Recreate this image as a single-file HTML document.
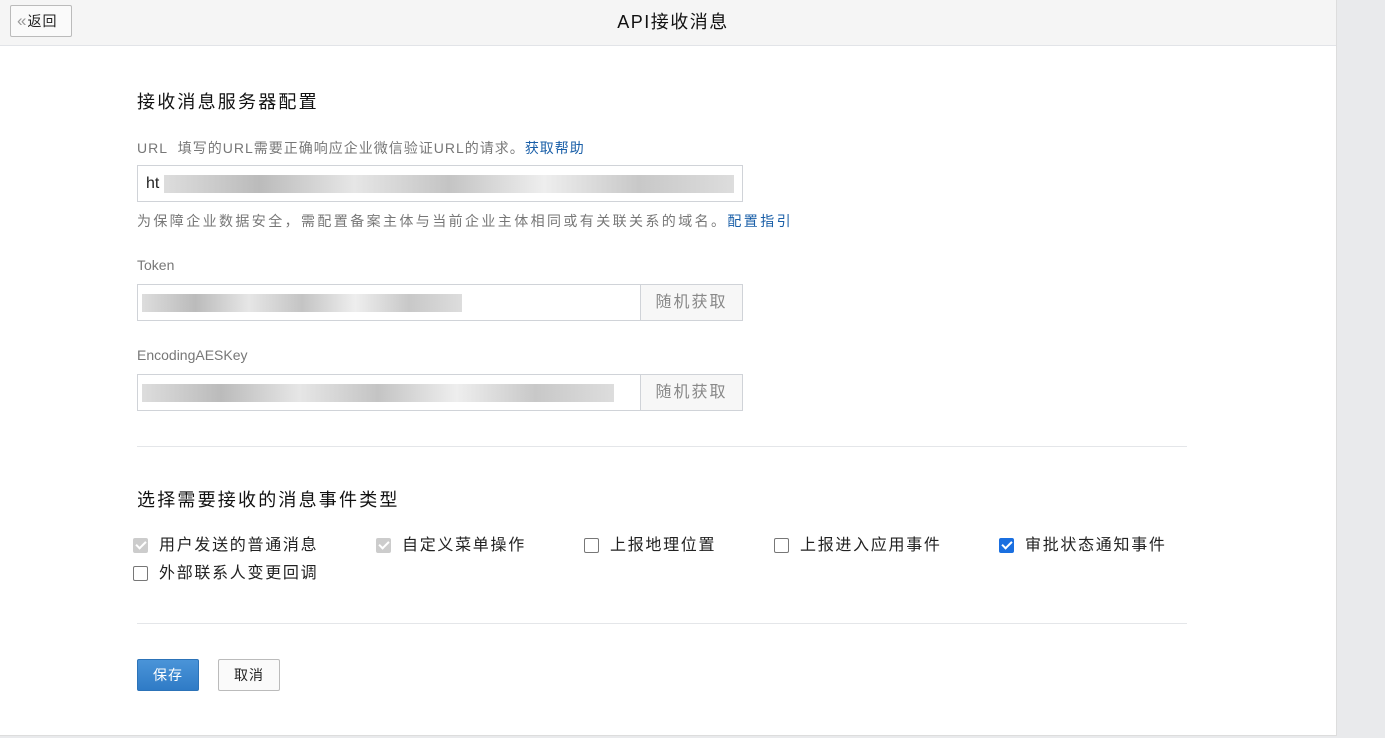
<!DOCTYPE html>
<html><head><meta charset="utf-8"><style>
*{box-sizing:border-box;margin:0;padding:0}
body{width:1385px;height:738px;background:#e9eaec;font-family:"Liberation Sans","Noto Sans CJK SC",sans-serif;position:relative;overflow:hidden;color:#222}
.main{position:absolute;left:0;top:0;width:1337px;height:736px;background:#fff;border-right:1px solid #ddd;border-bottom:1px solid #ddd}
.hd{height:46px;background:#f5f5f5;border-bottom:1px solid #e2e4e8;position:relative}
.back{position:absolute;left:10px;top:5px;width:62px;height:32px;border:1px solid #bbb;border-radius:2px;background:#fafafa;font-size:14px;line-height:30px;padding-left:6px;letter-spacing:1px}
.back span{color:#999;font-size:17px}
.title{position:absolute;left:0;right:0;top:0;text-align:center;font-size:18px;line-height:44px;color:#111;letter-spacing:1.5px;padding-left:10px}
.a{position:absolute;white-space:nowrap}
.h2{font-size:18px;color:#111;letter-spacing:2.2px}
.lbl{font-size:14px;color:#777}
.lnk{color:#1a5fa8}
.inp{border:1px solid #d0d3d8;height:37px;background:#fff;font-size:16px;line-height:35px;padding-left:8px;overflow:hidden}
.blur{position:absolute;top:9px;height:18px;background:linear-gradient(90deg,#ddd,#bbb,#e6e6e6,#c4c4c4,#eee,#c8c8c8,#ddd)}
.btn{position:absolute;right:0;top:0;width:102px;height:35px;border-left:1px solid #d0d3d8;background:#f7f7f7;color:#888;font-size:16px;text-align:center;line-height:35px;letter-spacing:2px}
.hr{position:absolute;left:137px;width:1050px;height:1px;background:#e4e6e9}
.cb{position:absolute;font-size:16px;color:#222;line-height:20px;letter-spacing:1.7px}
.cb i{position:absolute;left:-26px;top:2px;width:15px;height:15px;border:1.5px solid #777;border-radius:2px}
.cb i.d{background:#ccc;border-color:#ccc}
.cb i.c{background:#1a6fe0;border-color:#1a6fe0}
.cb i.d:after,.cb i.c:after{content:"";position:absolute;left:4px;top:0px;width:4px;height:8px;border:solid #fff;border-width:0 2px 2px 0;transform:rotate(45deg)}
</style></head><body>
<div class="main">
<div class="hd"><div class="back"><span>«</span>返回</div><div class="title">API接收消息</div></div>
<div class="a h2" style="left:137px;top:88px">接收消息服务器配置</div>
<div class="a lbl" style="left:137px;top:138px;letter-spacing:1px">URL&nbsp; 填写的URL需要正确响应企业微信验证URL的请求。<span class="lnk">获取帮助</span></div>
<div class="a inp" style="left:137px;top:165px;width:606px">ht<div class="blur" style="left:26px;width:570px"></div></div>
<div class="a lbl" style="left:137px;top:211px;letter-spacing:2.4px">为保障企业数据安全，需配置备案主体与当前企业主体相同或有关联关系的域名。<span class="lnk">配置指引</span></div>
<div class="a lbl" style="left:137px;top:257px">Token</div>
<div class="a inp" style="left:137px;top:284px;width:606px"><div class="blur" style="left:4px;width:320px"></div><div class="btn">随机获取</div></div>
<div class="a lbl" style="left:137px;top:347px">EncodingAESKey</div>
<div class="a inp" style="left:137px;top:374px;width:606px"><div class="blur" style="left:4px;width:472px"></div><div class="btn">随机获取</div></div>
<div class="hr" style="top:446px"></div>
<div class="a h2" style="left:137px;top:486px">选择需要接收的消息事件类型</div>
<div class="cb" style="left:159px;top:536px"><i class="d"></i>用户发送的普通消息</div>
<div class="cb" style="left:402px;top:536px"><i class="d"></i>自定义菜单操作</div>
<div class="cb" style="left:610px;top:536px"><i></i>上报地理位置</div>
<div class="cb" style="left:800px;top:536px"><i></i>上报进入应用事件</div>
<div class="cb" style="left:1025px;top:536px"><i class="c"></i>审批状态通知事件</div>
<div class="cb" style="left:159px;top:564px"><i></i>外部联系人变更回调</div>
<div class="hr" style="top:623px"></div>
<div class="a" style="left:137px;top:659px;width:62px;height:32px;background:linear-gradient(#4a94d8,#2f7bc6);border:1px solid #2c73b8;border-radius:2px;color:#fff;font-size:14px;text-align:center;line-height:30px;letter-spacing:1px">保存</div>
<div class="a" style="left:218px;top:659px;width:62px;height:32px;background:#fafafa;border:1px solid #bbb;border-radius:2px;color:#222;font-size:14px;text-align:center;line-height:30px;letter-spacing:1px">取消</div>
</div>
</body></html>
